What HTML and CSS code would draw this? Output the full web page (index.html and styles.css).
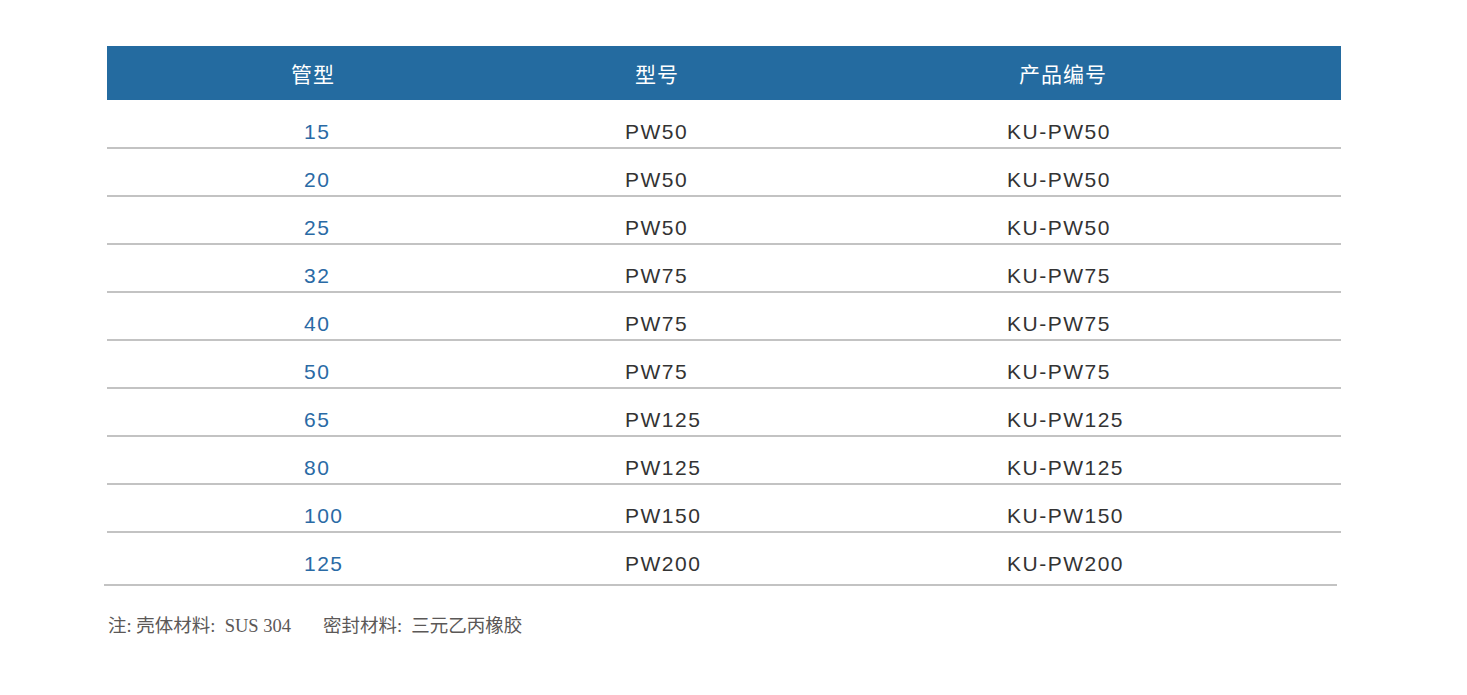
FILE: index.html
```html
<!DOCTYPE html>
<html lang="zh-CN">
<head>
<meta charset="utf-8">
<title>管型 型号 产品编号</title>
<link rel="stylesheet" href="styles.css">
</head>
<body>
<main class="page">
  <div class="table">
    <div class="head">
      <div class="hcell c1">管型</div>
      <div class="hcell c2">型号</div>
      <div class="hcell c3">产品编号</div>
    </div>
    <div class="row first"><div class="cell n1">15</div><div class="cell n2">PW50</div><div class="cell n3">KU-PW50</div></div>
    <div class="row"><div class="cell n1">20</div><div class="cell n2">PW50</div><div class="cell n3">KU-PW50</div></div>
    <div class="row"><div class="cell n1">25</div><div class="cell n2">PW50</div><div class="cell n3">KU-PW50</div></div>
    <div class="row"><div class="cell n1">32</div><div class="cell n2">PW75</div><div class="cell n3">KU-PW75</div></div>
    <div class="row"><div class="cell n1">40</div><div class="cell n2">PW75</div><div class="cell n3">KU-PW75</div></div>
    <div class="row"><div class="cell n1">50</div><div class="cell n2">PW75</div><div class="cell n3">KU-PW75</div></div>
    <div class="row"><div class="cell n1">65</div><div class="cell n2">PW125</div><div class="cell n3">KU-PW125</div></div>
    <div class="row"><div class="cell n1">80</div><div class="cell n2">PW125</div><div class="cell n3">KU-PW125</div></div>
    <div class="row"><div class="cell n1">100</div><div class="cell n2">PW150</div><div class="cell n3">KU-PW150</div></div>
    <div class="row last"><div class="cell n1">125</div><div class="cell n2">PW200</div><div class="cell n3">KU-PW200</div></div>
  </div>
  <p class="note"><span>注: 壳体材料:&nbsp; SUS 304</span><span class="seal">密封材料:&nbsp; 三元乙丙橡胶</span></p>
</main>
</body>
</html>
```

FILE: styles.css
```css
html, body {
  margin: 0;
  padding: 0;
  background: #ffffff;
}

.page {
  padding: 46px 0 0 107px;
}

.table {
  width: 1234px;
}

.head {
  display: grid;
  grid-template-columns: 412px 276px 546px;
  height: 54px;
  background: #246ba0;
}

.hcell {
  font-family: "Noto Sans CJK SC", "Liberation Sans", sans-serif;
  font-size: 21px;
  line-height: 54px;
  letter-spacing: 1px;
  color: #ffffff;
  text-align: center;
}

.hcell.c3 {
  padding-right: 10px;
}

.row {
  display: grid;
  grid-template-columns: 412px 276px 546px;
  height: 46px;
  border-bottom: 2px solid #c3c3c3;
}

.row.first {
  height: 47px;
}

.row.first .cell {
  padding-top: 20px;
}

.row.last {
  height: 51px;
  margin-left: -3px;
  margin-right: 4px;
  padding-left: 3px;
}

.row.last .n3 {
  margin-right: -4px;
}

.cell {
  font-family: "Liberation Sans", Arial, sans-serif;
  font-size: 21px;
  line-height: 24px;
  letter-spacing: 1.5px;
  color: #333333;
  padding-top: 19px;
}

.n1 {
  color: #2a6aa5;
  padding-left: 197px;
}

.n2 {
  padding-left: 106px;
}

.n3 {
  padding-left: 212px;
}

.note {
  margin: 28px 0 0 1px;
  display: flex;
  gap: 32px;
  font-family: "Liberation Serif", "Noto Sans CJK SC", serif;
  font-size: 18.5px;
  line-height: 24px;
  color: #5b5857;
}
```
